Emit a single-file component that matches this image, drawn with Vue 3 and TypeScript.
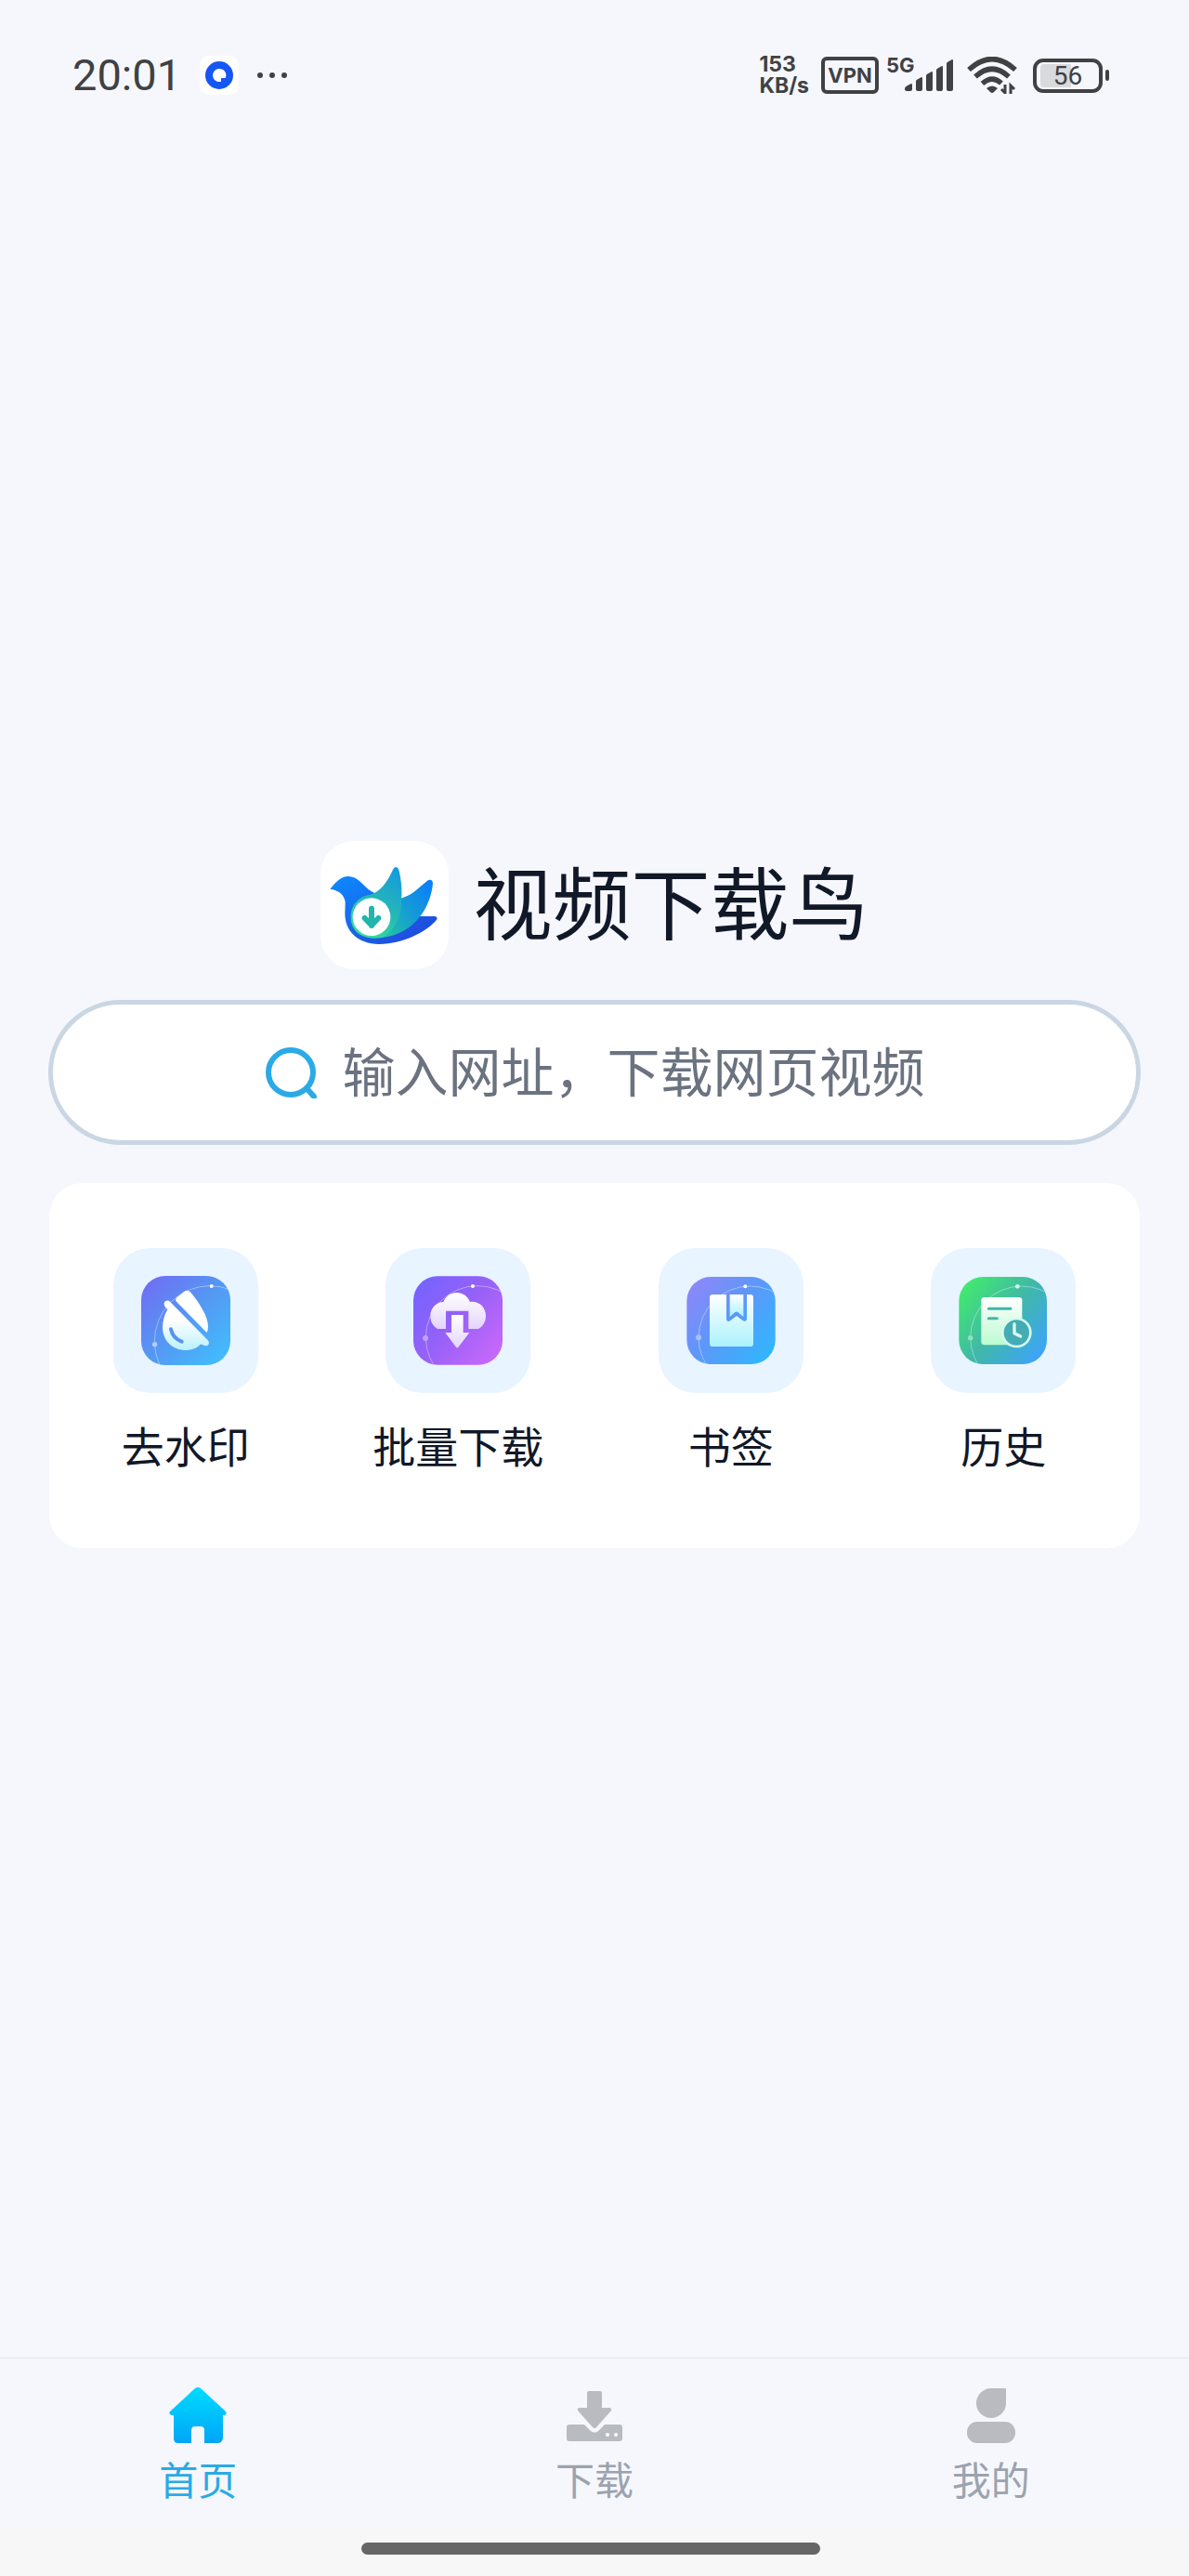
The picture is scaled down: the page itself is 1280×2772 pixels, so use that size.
<script setup lang="ts">
import { ref } from 'vue'

type FeatureId = 'watermark' | 'batch' | 'bookmark' | 'history'
type TabId = 'home' | 'download' | 'mine'

const features: { id: FeatureId; label: string }[] = [
  { id: 'watermark', label: '去水印' },
  { id: 'batch', label: '批量下载' },
  { id: 'bookmark', label: '书签' },
  { id: 'history', label: '历史' },
]

const tabs: { id: TabId; label: string }[] = [
  { id: 'home', label: '首页' },
  { id: 'download', label: '下载' },
  { id: 'mine', label: '我的' },
]

const activeTab = ref<TabId>('home')
const address = ref('')
</script>

<template>
  <div class="page">
    <header class="status">
      <div class="status-side">
        <span class="clock">20:01</span>
        <svg class="app-badge" viewBox="0 0 42 42" aria-hidden="true">
          <rect width="42" height="42" rx="10" fill="#fff" />
          <circle cx="21" cy="21" r="15" fill="#1457f5" />
          <path d="M21 14a7 7 0 1 0 2 13.700v-3.700h4.700A7 7 0 0 0 21 14z" fill="#fff" />
        </svg>
        <svg class="dots" viewBox="0 0 34 8" aria-hidden="true" fill="#404144">
          <circle cx="4" cy="4" r="3" />
          <circle cx="17" cy="4" r="3" />
          <circle cx="30" cy="4" r="3" />
        </svg>
      </div>
      <div class="status-side">
        <div class="speed"><span>153</span><span>KB/s</span></div>
        <span class="vpn">VPN</span>
        <div class="cell">
          <span class="cell-type">5G</span>
          <svg class="bars" viewBox="0 0 52 34" aria-hidden="true" fill="#404144">
            <path d="M0 31q0-2 7-5q1 0 1 1v5q0 2-2 2H2q-2 0-2-2z" />
            <path d="M12 23q0-1 6-4q1 0 1 1v12q0 2-2 2h-3q-2 0-2-2z" />
            <path d="M23 17q0-1 6-4q1 0 1 1v18q0 2-2 2h-3q-2 0-2-2z" />
            <path d="M34 11q0-1 6-4q1 0 1 1v24q0 2-2 2h-3q-2 0-2-2z" />
            <path d="M45 4q0-1 6-4q1 0 1 1v31q0 2-2 2h-3q-2 0-2-2z" />
          </svg>
        </div>
        <svg class="wifi" viewBox="0 0 54 40" aria-hidden="true" fill="none" stroke="#404144">
          <path d="M2 14Q27-9 52 14" stroke-width="5.500" />
          <path d="M9 21.500Q27 5 45 21.500" stroke-width="5.500" />
          <path d="M16.500 29Q27 19.500 37 28.500" stroke-width="5.500" />
          <path d="M21 34q6-5 12 0l-4 4q-2 2-4 0z" fill="#404144" stroke="none" />
          <path d="M41 30v9l-4-4M47 40v-9l4 4" stroke-width="3" />
        </svg>
        <div class="battery"><span class="battery-body">56</span></div>
      </div>
    </header>

    <main class="main">
      <div class="brand">
        <svg class="logo" viewBox="18 15 414 414" aria-hidden="true">
          <defs>
            <linearGradient id="bird-body" x1="0" y1="0" x2="1" y2="1">
              <stop offset="0" stop-color="#0d8bff" />
              <stop offset=".5" stop-color="#1767e8" />
              <stop offset="1" stop-color="#2440dc" />
            </linearGradient>
            <linearGradient id="bird-mid" x1="1" y1="0" x2="0" y2="1">
              <stop offset="0" stop-color="#087cff" />
              <stop offset=".5" stop-color="#159bd5" />
              <stop offset="1" stop-color="#24c79f" />
            </linearGradient>
            <linearGradient id="bird-wing" x1=".8" y1="0" x2=".3" y2="1">
              <stop offset="0" stop-color="#159bdc" />
              <stop offset=".5" stop-color="#25b6b8" />
              <stop offset="1" stop-color="#35dd98" />
            </linearGradient>
          </defs>
          <path d="M49 170C70 145 85 129 107 129C146 130 158 168 190 181L250 310L330 258H387Q397 260 394 268C365 306 287 348 207 348C138 347 96 306 97 246Q98 228 98 212C95 187 75 173 49 170z" fill="url(#bird-body)" />
          <path d="M215 327C250 247 263 202 284 198C315 190 342 160 365 142Q379 136 381 151C375 224 325 317 215 327z" fill="url(#bird-mid)" />
          <path d="M118 280C108 225 139 194 178 188C218 178 240 133 252 107Q259 93 270 104C281 144 282 184 279 205C284 251 257 310 215 328C170 334 128 320 118 280z" fill="url(#bird-wing)" />
          <circle cx="183" cy="260" r="61" fill="#fff" />
          <path d="M183 233v55M161 264l22 23l22-23" fill="none" stroke="#21b5ab" stroke-width="18" stroke-linecap="round" stroke-linejoin="round" />
        </svg>
        <h1 class="title">视频下载鸟</h1>
      </div>

      <label class="search">
        <svg class="search-icon" viewBox="0 0 56 56" aria-hidden="true" fill="none" stroke="#2aaae6" stroke-width="6" stroke-linecap="round">
          <circle cx="28" cy="28" r="24" />
          <path d="M45 45l8 9" />
        </svg>
        <input v-model="address" class="search-input" type="text" placeholder="输入网址，下载网页视频" aria-label="输入网址，下载网页视频" />
      </label>

      <section class="card">
        <button v-for="item in features" :key="item.id" class="feature" type="button">
          <span class="tile">
            <svg v-if="item.id === 'watermark'" class="tile-icon" viewBox="153 159 288 288" aria-hidden="true">
              <defs>
                <linearGradient id="wm-bg" x1="0" y1="0" x2="1" y2="1">
                  <stop offset="0" stop-color="#7369f5" />
                  <stop offset=".45" stop-color="#5794f2" />
                  <stop offset="1" stop-color="#3fc2ff" />
                </linearGradient>
                <linearGradient id="wm-fg" x1="0" y1="0" x2="0" y2="1">
                  <stop offset=".4" stop-color="#fff" />
                  <stop offset="1" stop-color="#b9f1fb" />
                </linearGradient>
                <clipPath id="wm-clip"><rect x="153" y="159" width="288" height="288" rx="78" /></clipPath>
              </defs>
              <rect x="153" y="159" width="288" height="288" rx="78" fill="url(#wm-bg)" />
              <g clip-path="url(#wm-clip)">
                <circle cx="375" cy="370" r="179" fill="none" stroke="#fff" stroke-opacity=".6" stroke-width="2" />
                <circle cx="380" cy="192" r="6" fill="#fff" />
                <circle cx="197" cy="380" r="8" fill="#b7ccf8" />
              </g>
              <path d="M267 242C262 238 264 235 268 229L291 210Q302 202 312 211C340 245 370 291 369 323Q369 334 365 342z" fill="#fff" />
              <path d="M246 242L367 365Q375 373 370 381Q363 388 352 382L346 379C332 394 313 400 294 399C252 397 222 367 222 324Q223 293 238 268L229 257Q224 247 231 241Q239 236 246 242z" fill="url(#wm-fg)" />
              <path d="M249 331Q255 360 284 371" fill="none" stroke="#5793ee" stroke-width="12" stroke-linecap="round" />
            </svg>

            <svg v-else-if="item.id === 'batch'" class="tile-icon" viewBox="165 159 288 288" aria-hidden="true">
              <defs>
                <linearGradient id="bt-bg" x1="0" y1=".1" x2="1" y2=".9">
                  <stop offset="0" stop-color="#7463ff" />
                  <stop offset=".5" stop-color="#9861f7" />
                  <stop offset="1" stop-color="#cc68fb" />
                </linearGradient>
                <linearGradient id="bt-fg" x1="0" y1="0" x2="0" y2="1">
                  <stop offset="0" stop-color="#fff" />
                  <stop offset="1" stop-color="#e4d5fc" />
                </linearGradient>
                <clipPath id="bt-clip"><rect x="165" y="160" width="288" height="286" rx="78" /></clipPath>
              </defs>
              <rect x="165" y="160" width="288" height="286" rx="78" fill="url(#bt-bg)" />
              <g clip-path="url(#bt-clip)">
                <circle cx="372" cy="358" r="167" fill="none" stroke="#fff" stroke-opacity=".6" stroke-width="2" />
                <circle cx="357" cy="192" r="6" fill="#fff" />
                <circle cx="204" cy="360" r="9" fill="#c2a2fb" />
              </g>
              <path d="M244 330C228 322 220 307 220 288C220 262 240 243 262 243C270 224 286 213 305 213C325 213 342 226 348 243C376 239 399 260 399 288C399 308 389 323 375 330H343V272H270V330z" fill="url(#bt-fg)" />
              <path d="M288 285H326V342H346L310 389Q307 392 303 389L268 342H288z" fill="url(#bt-fg)" />
            </svg>

            <svg v-else-if="item.id === 'bookmark'" class="tile-icon" viewBox="147 159 288 288" aria-hidden="true">
              <defs>
                <linearGradient id="bm-bg" x1="0" y1=".1" x2="1" y2=".9">
                  <stop offset="0" stop-color="#9086fa" />
                  <stop offset=".45" stop-color="#5e97f8" />
                  <stop offset="1" stop-color="#2db8ff" />
                </linearGradient>
                <linearGradient id="bm-fg" x1="0" y1="0" x2="0" y2="1">
                  <stop offset="0" stop-color="#fff" />
                  <stop offset="1" stop-color="#abf2fc" />
                </linearGradient>
                <clipPath id="bm-clip"><rect x="148" y="162" width="286" height="282" rx="78" /></clipPath>
              </defs>
              <rect x="148" y="162" width="286" height="282" rx="78" fill="url(#bm-bg)" />
              <g clip-path="url(#bm-clip)">
                <circle cx="352" cy="358" r="166" fill="none" stroke="#fff" stroke-opacity=".6" stroke-width="2" />
                <circle cx="337" cy="193" r="6" fill="#fff" />
                <circle cx="186" cy="358" r="9" fill="#a5c3fb" />
              </g>
              <path d="M232 219H276V299Q278 309 288 304L309 288L330 304Q339 308 342 299V219H353Q363 219 363 229V377Q363 387 353 387H232Q222 387 222 377V229Q222 219 232 219z" fill="url(#bm-fg)" />
              <path d="M287 219H331V291L313 276Q309 273 304 276L287 291z" fill="url(#bm-fg)" />
            </svg>

            <svg v-else class="tile-icon" viewBox="161 159 288 288" aria-hidden="true">
              <defs>
                <linearGradient id="hs-bg" x1="0" y1=".1" x2="1" y2=".9">
                  <stop offset="0" stop-color="#42ed69" />
                  <stop offset=".5" stop-color="#40b8a8" />
                  <stop offset="1" stop-color="#3da2ff" />
                </linearGradient>
                <linearGradient id="hs-fg" x1="0" y1="0" x2="0" y2="1">
                  <stop offset="0" stop-color="#fff" />
                  <stop offset="1" stop-color="#bbfbd0" />
                </linearGradient>
                <clipPath id="hs-clip"><rect x="162" y="162" width="284" height="282" rx="78" /></clipPath>
              </defs>
              <rect x="162" y="162" width="284" height="282" rx="78" fill="url(#hs-bg)" />
              <g clip-path="url(#hs-clip)">
                <circle cx="365" cy="358" r="166" fill="none" stroke="#fff" stroke-opacity=".6" stroke-width="2" />
                <circle cx="351" cy="193" r="7" fill="#d5f8f0" />
                <circle cx="199" cy="359" r="8" fill="#93e4b8" />
              </g>
              <rect x="234" y="228" width="132" height="154" rx="10" fill="url(#hs-fg)" />
              <path d="M258 265h71M258 296h27" stroke="#45b5a9" stroke-width="9" stroke-linecap="round" />
              <circle cx="348" cy="342" r="45" fill="#44acb5" stroke="#d5fbee" stroke-width="8" />
              <path d="M341 314v30l20 10" fill="none" stroke="#d9fcf2" stroke-width="10" stroke-linecap="round" stroke-linejoin="round" />
            </svg>
          </span>
          <span class="feature-label">{{ item.label }}</span>
        </button>
      </section>
    </main>

    <nav class="tabs">
      <button
        v-for="tab in tabs"
        :key="tab.id"
        class="tab"
        :class="{ active: activeTab === tab.id }"
        type="button"
        @click="activeTab = tab.id"
      >
        <svg v-if="tab.id === 'home'" class="tab-icon" viewBox="0 0 62 60" aria-hidden="true">
          <defs>
            <linearGradient id="home-fill" x1="0" y1="0" x2="0" y2="1">
              <stop offset="0" stop-color="#00dcff" />
              <stop offset="1" stop-color="#00a5f6" />
            </linearGradient>
          </defs>
          <path d="M28 1Q31-1 34 1L61 26Q63 30 58 30V55Q57 60 52 60H38V46Q38 42 34 42H28Q24 42 24 46V60H10Q5 60 5 55V30H3Q-1 29 1 26z" fill="url(#home-fill)" />
        </svg>
        <svg v-else-if="tab.id === 'download'" class="tab-icon" viewBox="0 0 62 60" aria-hidden="true">
          <path d="M25 4H37Q39 4 39 6V22H48Q50 23 49 25L33 43Q31 45 29 43L13 25Q12 22 15 22H23V6Q23 4 25 4z" fill="#b8bbc0" />
          <path d="M4 40H20L27 47Q31 50 35 47L42 40H58Q61 40 61 43V55Q61 58 58 58H4Q1 58 1 55V43Q1 40 4 40z" fill="#b8bbc0" />
          <circle cx="45" cy="51" r="2" fill="#fff" />
          <circle cx="54" cy="51" r="2" fill="#fff" />
        </svg>
        <svg v-else class="tab-icon" viewBox="0 0 62 60" aria-hidden="true" fill="#b8bbc0">
          <path d="M31 1H46Q47 1 47 2V17A16 16 0 1 1 31 1z" />
          <rect x="5" y="37" width="52" height="23" rx="11" />
        </svg>
        <span>{{ tab.label }}</span>
      </button>
    </nav>
    <footer class="gesture"><span class="gesture-bar"></span></footer>
  </div>
</template>

<style>
body {
  margin: 0;
  background: #f5f7fc;
}
</style>

<style scoped>
.page {
  display: flex;
  flex-direction: column;
  min-height: 100vh;
  background: #f5f7fc;
  font-family: "Noto Sans CJK SC", sans-serif;
  color: #111827;
}

button {
  padding: 0;
  border: 0;
  background: none;
  font: inherit;
  color: inherit;
}

.status {
  display: flex;
  justify-content: space-between;
  align-items: center;
  box-sizing: border-box;
  height: 120px;
  padding: 42px 86px 0 78px;
  color: #404144;
  font-family: Roboto, sans-serif;
}

.status-side {
  display: flex;
  align-items: center;
}

.clock {
  font-size: 47px;
  line-height: 56px;
  font-weight: 400;
}

.app-badge {
  width: 42px;
  height: 42px;
  margin-left: 20px;
}

.dots {
  width: 34px;
  height: 8px;
  margin-left: 19px;
}

.speed {
  display: flex;
  flex-direction: column;
  font-family: Inter, sans-serif;
  font-size: 23px;
  line-height: 23px;
  font-weight: 700;
}

.vpn {
  box-sizing: border-box;
  width: 62px;
  height: 40px;
  margin-left: 13px;
  border: 4px solid #404144;
  border-radius: 6px;
  font-family: Inter, sans-serif;
  font-size: 22px;
  line-height: 32px;
  font-weight: 700;
  text-align: center;
}

.cell {
  position: relative;
  width: 72px;
  height: 40px;
  margin-left: 8px;
}

.cell-type {
  position: absolute;
  top: 0;
  left: 0;
  font-family: Inter, sans-serif;
  font-size: 22px;
  line-height: 18px;
  font-weight: 700;
}

.bars {
  position: absolute;
  right: 0;
  bottom: 3px;
  width: 52px;
  height: 34px;
}

.wifi {
  width: 54px;
  height: 40px;
  margin-left: 15px;
}

.battery {
  display: flex;
  align-items: center;
  gap: 3px;
  margin-left: 17px;
}

.battery::after {
  content: "";
  width: 4px;
  height: 12px;
  border-radius: 2px;
  background: #404144;
}

.battery-body {
  box-sizing: border-box;
  width: 75px;
  height: 37px;
  border: 4px solid #404144;
  border-radius: 11px;
  background: linear-gradient(90deg, #d9dadd 56%, #f5f7fc 56%) content-box;
  padding: 2px 4px;
  font-size: 28px;
  line-height: 25px;
  text-align: center;
}

.main {
  flex: 1;
  display: flex;
  flex-direction: column;
  justify-content: center;
  padding: 0 52px 86px;
}

.brand {
  display: flex;
  justify-content: center;
  align-items: flex-start;
  gap: 26px;
}

.logo {
  width: 138px;
  height: 138px;
  border-radius: 36px;
  background: #fff;
}

.title {
  margin: 0;
  font-size: 85px;
  line-height: 126px;
  font-weight: 400;
}

.search {
  display: flex;
  justify-content: center;
  align-items: center;
  gap: 28px;
  box-sizing: border-box;
  height: 156px;
  margin-top: 33px;
  border: 5px solid #cad6e3;
  border-radius: 78px;
  background: #fff;
}

.search-icon {
  width: 56px;
  height: 56px;
}

.search-input {
  width: 11em;
  padding: 0 0 8px;
  border: 0;
  outline: 0;
  background: none;
  font-family: inherit;
  font-size: 57px;
  line-height: 84px;
  color: #111827;
}

.search-input::placeholder {
  color: #6b7280;
  opacity: 1;
}

.card {
  display: grid;
  grid-template-columns: repeat(4, 1fr);
  margin: 41px 1px 0;
  padding: 70px 0 78px;
  border-radius: 36px;
  background: #fff;
}

.feature {
  display: flex;
  flex-direction: column;
  align-items: center;
  gap: 21px;
}

.tile {
  display: flex;
  justify-content: center;
  align-items: center;
  width: 156px;
  height: 156px;
  border-radius: 40px;
  background: #e8f4ff;
}

.tile-icon {
  width: 96px;
  height: 96px;
}

.feature-label {
  font-size: 46px;
  line-height: 68px;
}

.tabs {
  display: grid;
  grid-template-columns: repeat(3, 1fr);
  box-sizing: border-box;
  height: 183px;
  border-top: 1px solid #e3e6eb;
}

.tab {
  display: flex;
  flex-direction: column;
  align-items: center;
  gap: 7px;
  padding-top: 31px;
  font-size: 42px;
  line-height: 62px;
  color: #9ca3af;
}

.tab.active {
  color: #2aaae6;
}

.tab-icon {
  width: 62px;
  height: 60px;
}

.gesture {
  display: flex;
  justify-content: center;
  box-sizing: border-box;
  height: 52px;
  padding: 16px 8px 0 0;
  background: #f7f7f7;
}

.gesture-bar {
  width: 494px;
  height: 13px;
  border-radius: 7px;
  background: #666;
}
</style>
